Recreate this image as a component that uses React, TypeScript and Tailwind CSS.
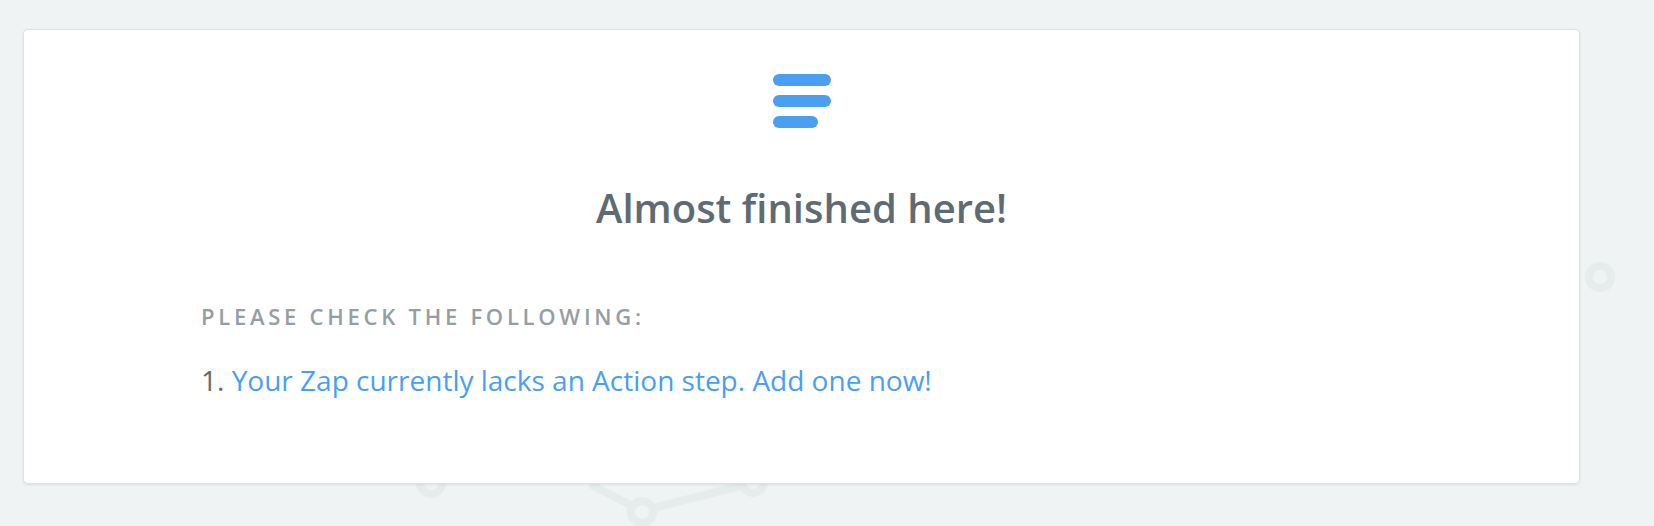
import React from 'react';

const ListIcon: React.FC = () => (
  <svg width="60" height="55" viewBox="0 0 60 55" fill="none">
    <rect x="1" y="1" width="58" height="12" rx="6" fill="#4a9ff0" />
    <rect x="1" y="22" width="58" height="12" rx="6" fill="#4a9ff0" />
    <rect x="1" y="43" width="45" height="12" rx="6" fill="#4a9ff0" />
  </svg>
);

// faint node-graph decoration that peeks out behind the card
const Backdrop: React.FC = () => (
  <svg className="absolute inset-0" width="1654" height="526" viewBox="0 0 1654 526" fill="none">
    <g stroke="#e6ebec" strokeWidth="8">
      <circle cx="1600" cy="277" r="11" />
      <circle cx="431" cy="483" r="11" />
      <circle cx="642" cy="512" r="11" />
      <circle cx="753" cy="482" r="11" />
      <line x1="590" y1="484" x2="632" y2="506" />
      <line x1="653" y1="508" x2="741" y2="486" />
    </g>
  </svg>
);

export default function App() {
  return (
    <div
      className="relative w-[1654px] h-[526px] overflow-hidden bg-[#eff3f4] pt-[29px] pl-[23px]"
      style={{ fontFamily: '"Open Sans", "Noto Sans", sans-serif' }}
    >
      <Backdrop />
      <div className="relative w-[1557px] h-[455px] rounded-[5px] border border-[#dde2e5] bg-white shadow-[0_1px_3px_rgba(0,0,0,0.08)]">
        <div className="flex flex-col items-center pt-[43px]">
          <ListIcon />
          <h1 className="mt-[56px] text-[40px] leading-[48px] font-semibold text-[#5f6b73]">
            Almost finished here!
          </h1>
        </div>
        <div className="pl-[177px] pt-[70px]">
          <h2 className="text-[22px] leading-[28px] font-semibold tracking-[0.17em] text-[#959ea3] uppercase">
            Please check the following:
          </h2>
          <ol className="mt-[31px] text-[28px] leading-[38px] text-[#5f6b73]">
            <li>
              1.{' '}
              <a href="#" className="text-[#4a9ff0]">
                Your Zap currently lacks an Action step. Add one now!
              </a>
            </li>
          </ol>
        </div>
      </div>
    </div>
  );
}
